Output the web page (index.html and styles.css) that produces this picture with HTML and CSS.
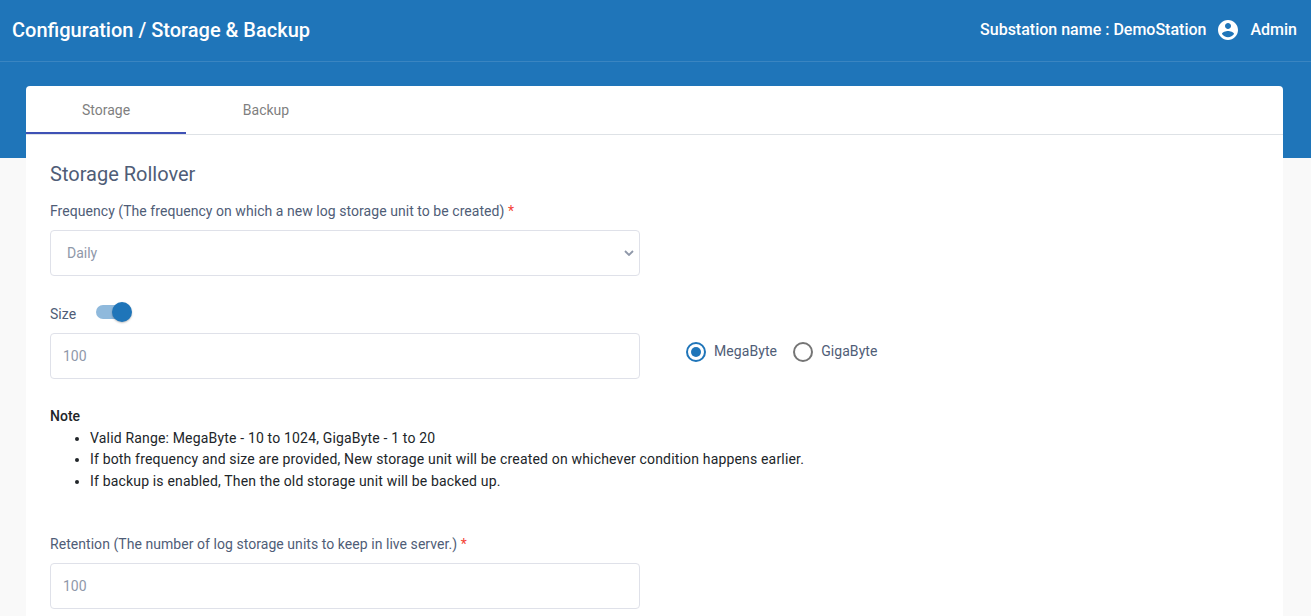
FILE: index.html
```html
<!DOCTYPE html>
<html lang="en">
<head>
<meta charset="utf-8">
<title>Configuration / Storage &amp; Backup</title>
<link rel="stylesheet" href="styles.css">
</head>
<body>
<header class="topbar">
  <h1 class="title">Configuration / Storage &amp; Backup</h1>
  <div class="user">
    <span class="station">Substation name : DemoStation</span>
    <svg class="avatar" viewBox="0 0 24 24" width="24" height="24" aria-hidden="true"><path fill="#fff" d="M12 2C6.48 2 2 6.48 2 12s4.48 10 10 10 10-4.48 10-10S17.52 2 12 2zm0 3c1.66 0 3 1.34 3 3s-1.34 3-3 3-3-1.34-3-3 1.34-3 3-3zm0 14.2c-2.5 0-4.71-1.28-6-3.22.03-1.99 4-3.08 6-3.08 1.99 0 5.97 1.09 6 3.08-1.29 1.94-3.5 3.22-6 3.22z"/></svg>
    <span class="admin">Admin</span>
  </div>
</header>
<main class="card">
  <nav class="tabs">
    <a class="tab tab-active">Storage</a>
    <a class="tab">Backup</a>
  </nav>
  <section class="content">
    <h2 class="heading">Storage Rollover</h2>
    <label class="label label-frequency">Frequency (The frequency on which a new log storage unit to be created) <span class="req">*</span></label>
    <select class="control select"><option>Daily</option></select>
    <div class="size-row">
      <span class="label size-label">Size</span>
      <span class="switch"><span class="knob"></span></span>
    </div>
    <div class="field-row">
      <input class="control input" type="text" placeholder="100">
      <div class="radios">
        <span class="radio radio-on"><span class="dot"></span></span><span class="radio-text">MegaByte</span>
        <span class="radio radio-off"></span><span class="radio-text">GigaByte</span>
      </div>
    </div>
    <div class="note">
      <strong class="note-title">Note</strong>
      <ul class="note-list">
        <li>Valid Range: MegaByte - 10 to 1024, GigaByte - 1 to 20</li>
        <li>If both frequency and size are provided, New storage unit will be created on whichever condition happens earlier.</li>
        <li>If backup is enabled, Then the old storage unit will be backed up.</li>
      </ul>
    </div>
    <label class="label label-retention">Retention (The number of log storage units to keep in live server.) <span class="req">*</span></label>
    <input class="control input" type="text" placeholder="100">
  </section>
</main>
</body>
</html>
```
FILE: styles.css
```css
html, body { height: 100%; }
body {
  margin: 0;
  overflow: hidden;
  font-family: Roboto, "Liberation Sans", sans-serif;
  background: linear-gradient(#1f75b9 158px, #f9f9f9 158px);
  color: #212529;
}
.topbar {
  height: 61px;
  box-sizing: content-box;
  border-bottom: 1px solid #3a85c1;
  display: flex;
  align-items: center;
  justify-content: space-between;
  padding: 0 14px 0 12px;
  color: #fff;
}
.title { margin: 0; font-size: 20px; font-weight: 500; line-height: 24px; position: relative; top: -1px; }
.user { display: flex; align-items: center; font-size: 16px; font-weight: 500; position: relative; top: -1px; }
.station { font-size: 16px; }
.avatar { margin: 0 10px 0 10px; }
.card {
  margin: 24px 28px 0 26px;
  background: #fff;
  border-radius: 4px 4px 0 0;
}
.tabs { display: flex; height: 48px; border-bottom: 1px solid #dee2e6; }
.tab {
  width: 160px;
  display: flex;
  align-items: center;
  justify-content: center;
  font-size: 14px;
  color: #7f7f7f;
  box-sizing: border-box;
  height: 48px;
}
.tab-active { border-bottom: 2px solid #3f51b5; padding-top: 2px; }
.content { padding: 24px; }
.heading { margin: 3px 0 0; font-size: 20px; font-weight: 400; line-height: 24px; color: #4f5d77; }
.label { display: block; font-size: 14px; line-height: 20px; color: #4f5d77; letter-spacing: .05px; }
.label-frequency { margin-top: 15px; margin-bottom: 9px; }
.req { color: #f44336; }
.control {
  display: block;
  width: 590px;
  height: 46px;
  box-sizing: border-box;
  border: 1px solid #dfe1e9;
  border-radius: 4px;
  background-color: #fff;
  font-family: inherit;
  font-size: 14px;
  color: #8f98a9;
  outline: none;
}
.select {
  padding: 0 16px;
  appearance: none;
  background-image: url("data:image/svg+xml,%3Csvg xmlns='http://www.w3.org/2000/svg' width='10' height='6' viewBox='0 0 10 6'%3E%3Cpath d='M1 1l4 4 4-4' fill='none' stroke='%238f98a9' stroke-width='1.8'/%3E%3C/svg%3E");
  background-repeat: no-repeat;
  background-position: right 5px center;
}
.input { padding: 0 12px; }
.input::placeholder { color: #8f98a9; opacity: 1; }
.size-row { display: flex; align-items: center; margin-top: 22px; margin-bottom: 6px; height: 29px; }
.size-label { width: 46px; margin-top: 3px; }
.switch {
  position: relative;
  width: 34px;
  height: 14px;
  border-radius: 7px;
  background: #8fb9dc;
  margin-top: -1px;
}
.knob {
  position: absolute;
  right: -2px;
  top: -3px;
  width: 20px;
  height: 20px;
  border-radius: 50%;
  background: #1f75b9;
  box-shadow: 0 1px 2px rgba(0, 0, 0, .25);
}
.field-row { display: flex; align-items: center; }
.radios { display: flex; align-items: center; margin-left: 46px; margin-bottom: 8px; font-size: 14px; color: #4f5d77; font-weight: 400; letter-spacing: .08px; }
.radio { width: 20px; height: 20px; box-sizing: border-box; border-radius: 50%; border: 2px solid #757575; display: flex; align-items: center; justify-content: center; }
.radio-on { border-color: #1f75b9; }
.dot { width: 10px; height: 10px; border-radius: 50%; background: #1f75b9; }
.radio-text { margin-left: 8px; margin-right: 16px; margin-bottom: 2px; }
.note { margin-top: 26px; font-size: 14px; line-height: 22px; }
.note-title { display: block; font-weight: 500; margin-bottom: .6px; }
.note-list { margin: 0; padding-left: 40px; line-height: 21.5px; letter-spacing: .17px; }
.label-retention { margin-top: 41.9px; margin-bottom: 9px; }
```
